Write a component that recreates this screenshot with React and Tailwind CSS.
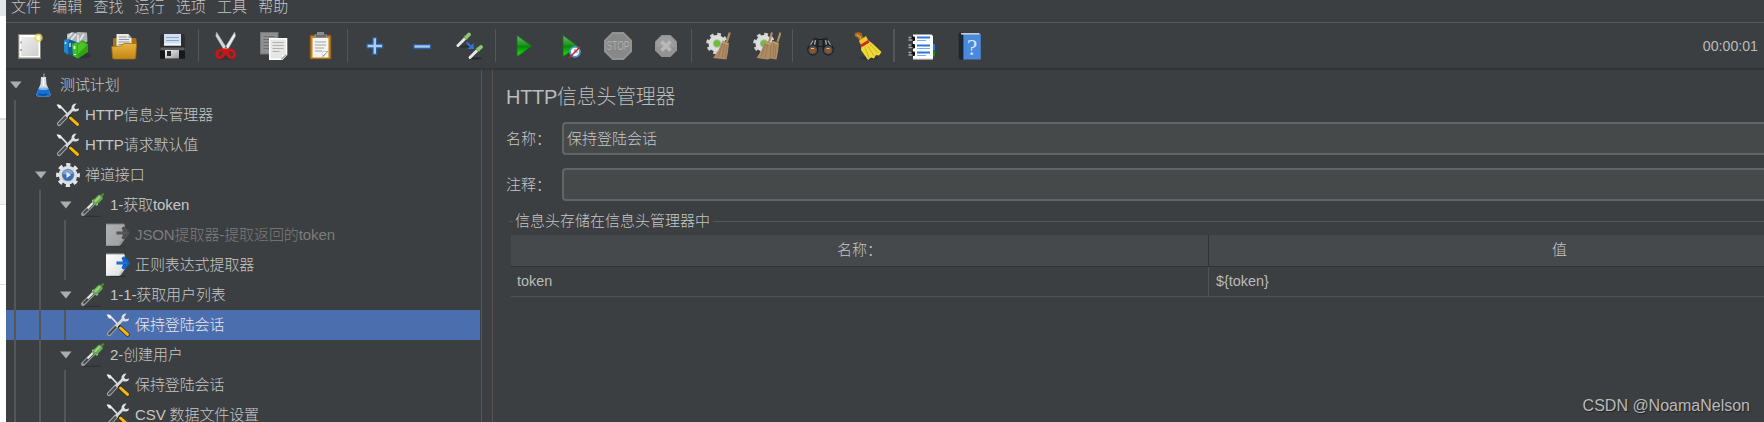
import clsx from 'clsx'

const MENUS = ['文件', '编辑', '查找', '运行', '选项', '工具', '帮助']

const TREE = [
  { level: 0, icon: 'flask', label: '测试计划', open: true },
  { level: 1, icon: 'tools', label: 'HTTP信息头管理器' },
  { level: 1, icon: 'tools', label: 'HTTP请求默认值' },
  { level: 1, icon: 'gear', label: '禅道接口', open: true },
  { level: 2, icon: 'dropper', label: '1-获取token', open: true },
  { level: 3, icon: 'extractor', label: 'JSON提取器-提取返回的token', disabled: true },
  { level: 3, icon: 'extractor', label: '正则表达式提取器' },
  { level: 2, icon: 'dropper', label: '1-1-获取用户列表', open: true },
  { level: 3, icon: 'tools', label: '保持登陆会话', selected: true },
  { level: 2, icon: 'dropper', label: '2-创建用户', open: true },
  { level: 3, icon: 'tools', label: '保持登陆会话' },
  { level: 3, icon: 'tools', label: 'CSV 数据文件设置' },
]

/* ---------- toolbar icons, 28x28 ---------- */

function Svg({ children }) {
  return <svg viewBox="0 0 28 28" className="w-7 h-7 shrink-0">{children}</svg>
}

function NewIcon() {
  return (
    <Svg>
      <rect x="2" y="2" width="23" height="25" fill="#85857a" />
      <rect x="3.3" y="3" width="20.7" height="22.5" fill="#fff" />
      <rect x="5" y="5" width="17.5" height="19" fill="url(#paper)" />
      <path d="M5 9.5v2M5 17v2" stroke="#888" strokeWidth="1.2" />
      <circle cx="22.5" cy="5.7" r="4.3" fill="#e8d84c" opacity=".75" />
      <circle cx="22.5" cy="5.7" r="2.2" fill="#fffef0" />
    </Svg>
  )
}

function TemplatesIcon() {
  return (
    <Svg>
      <ellipse cx="18" cy="23.5" rx="9" ry="3" fill="#292b2c" opacity=".6" />
      <path d="M3 2 9 0l2 1 3-1 9 .5.5 9L16 14 3 10z" fill="#aeb4b6" />
      <path d="M4 5 8 1M7 8l5-6M16 8l4-6M14 3v7" stroke="#e8ecec" strokeWidth="1.5" />
      <path d="M0 8 4.5 7v16L0 20z" fill="#1e86cc" />
      <path d="m4.5 7 8 3v15l-8-3z" fill="#0c5f9f" />
      <path d="M1.5 10v2M6 11v4" stroke="#b8e2fa" strokeWidth="1.5" />
      <path d="m8 12 6-2v16.500l-5-2.500z" fill="#42bd22" />
      <path d="m13.500 12 5-4 5.500 4v8l-10.500 7z" fill="#2fa312" />
      <path d="m14 13 4-3.500 5 3.500-9 9z" fill="#4cc428" />
      <path d="M10.500 14v3M11 22v1" stroke="#eaffdf" strokeWidth="1.8" />
    </Svg>
  )
}

function OpenIcon() {
  return (
    <Svg>
      <path d="M2 8q0-2 2-2h20q1.500 0 1.500 2v8H2z" fill="#a87414" />
      <path d="M5.5 2h12l3 4v10h-15z" fill="#e9e9e9" />
      <path d="M8 5h8M8 7.5h10M7.5 10h11M7.5 12.5h11" stroke="#999" />
      <path d="M17.5 2v4h3z" fill="#aaa" />
      <path d="M.7 14.500 10 14l3-2.500h12.500l-.8 14q0 1.500-2 1.500H3q-1.500 0-1.500-2z" fill="url(#folder)" stroke="#a56e0c" strokeWidth=".8" />
    </Svg>
  )
}

function SaveIcon() {
  return (
    <Svg>
      <path d="M2.5 2h22l1.500 2v23H1V4z" fill="#2c2d2f" />
      <path d="M1 19h25v7.5H1z" fill="#161718" />
      <path d="M1.5 15.500h24v2.500h-24z" fill="#5c5f61" />
      <rect x="5" y="2" width="17" height="11.500" fill="#d0dff2" />
      <path d="M7 5.500h13M7 8.500h13" stroke="#90a5bd" />
      <path d="M5 12.500h17" stroke="#f4f7fa" strokeWidth="2" />
      <rect x="6" y="18" width="14" height="8.500" fill="url(#steel)" />
      <rect x="8" y="19" width="4" height="5" fill="#27292a" />
    </Svg>
  )
}

function CutIcon() {
  return (
    <Svg>
      <ellipse cx="14" cy="26" rx="10" ry="2" fill="#292b2c" opacity=".5" />
      <path d="m4.500 0-.8 4L12 18h4z" fill="#d8dada" stroke="#8f9192" strokeWidth=".6" />
      <path d="m22.700 0 .8 4L15.500 18h-4z" fill="#eeefef" stroke="#9b9d9e" strokeWidth=".6" />
      <circle cx="14" cy="15.500" r="1" fill="#666" />
      <g fill="none" stroke="#d01414" strokeWidth="2.900">
        <path d="M12.500 18Q4.500 17 4.900 23q.8 4 4.800 2 3-2 2.800-7z" />
        <path d="M15 18q8-1 7.600 5-.8 4-4.800 2-3-2-2.800-7z" />
      </g>
    </Svg>
  )
}

function CopyIcon() {
  return (
    <Svg>
      <rect x=".5" y=".5" width="17.500" height="21.500" fill="#8e9091" stroke="#75787a" />
      <path d="M3.500 4.500h11M3.500 7.500h6M3.500 10.500h6M3.500 13.500h6M3.500 16.500h6" stroke="#6d6f70" />
      <path d="M9 6h18.300v17l-5 5H9z" fill="#fff" />
      <path d="M10.500 7.500h15.300V22l-4 4.500H10.500z" fill="#e6e7e5" />
      <path d="M12.500 10.500h11M12.500 13.500h11M12.500 16.500h11M12.500 19.500h7" stroke="#b0b2b0" />
      <path d="M21.500 28v-5.500h6z" fill="#a8aaa8" />
      <path d="M21.500 26v-3.500h4z" fill="#fff" />
    </Svg>
  )
}

function PasteIcon() {
  return (
    <Svg>
      <rect x="2.700" y="2.700" width="21.700" height="24.600" rx="1" fill="#8a5510" />
      <rect x="3.700" y="4" width="19.700" height="22.500" fill="#c98316" />
      <rect x="5.500" y="6" width="16" height="19.500" fill="#f4f4f2" />
      <path d="M8 10h11M8 13h11M8 16h9M8 19h7" stroke="#a2a4a2" />
      <path d="M15.500 25.500V19l6 0z" fill="#8a8c8a" />
      <path d="M15.500 24v-4.500h5z" fill="#fff" />
      <path d="M10 0h7v2.500h3V6H7.500V2.500H10z" fill="#8c8e8e" />
      <path d="M9 4h10" stroke="#55585a" strokeWidth="1.300" />
    </Svg>
  )
}

function PlusIcon() {
  return (
    <Svg>
      <path d="M11.300 5h5v6.500h6v5h-6V23h-5v-6.500h-6v-5h6z" fill="#2d5f9f" />
      <path d="M12.600 6.300H15v6.500h6v2.400h-6v6.500h-2.400v-6.500h-6v-2.400h6z" fill="#a9ccf0" />
    </Svg>
  )
}

function MinusIcon() {
  return (
    <Svg>
      <path d="M5.200 12h18v5.200h-18z" fill="#2d5f9f" />
      <path d="M6.500 13.300h15.400v2.400H6.500z" fill="#a9ccf0" />
    </Svg>
  )
}

function ToggleIcon() {
  return (
    <Svg>
      <ellipse cx="19" cy="26.500" rx="7" ry="1.200" fill="#25282a" />
      <ellipse cx="8" cy="14.500" rx="6" ry="1" fill="#2a2d2f" />
      <path d="m2 13.500 7-7" stroke="#e6e7e4" strokeWidth="3" strokeLinecap="round" />
      <path d="m9 6.500 1.500-1.500" stroke="#5e7d4e" strokeWidth="5" />
      <path d="m10.500 5 2.500-2.500" stroke="#8fc873" strokeWidth="3.800" strokeLinecap="round" />
      <path d="m14 25.500 7-7" stroke="#e6e7e4" strokeWidth="3" strokeLinecap="round" />
      <path d="m21 18.500 1.500-1.500" stroke="#5e7d4e" strokeWidth="5" />
      <path d="m22.500 17 2.500-2" stroke="#8fc873" strokeWidth="3.800" strokeLinecap="round" />
      <path d="m10.500 10.500 5 4.500" stroke="#2d74dc" strokeWidth="2" />
      <path d="m17.500 11 .5 6h-6.500z" fill="#2d74dc" />
    </Svg>
  )
}

function PlayIcon() {
  return (
    <Svg>
      <path d="M8 3.300 22.700 14 8 25z" fill="url(#play)" stroke="#126f12" strokeWidth=".7" />
    </Svg>
  )
}

function PlayNoPauseIcon() {
  return (
    <Svg>
      <path d="M6 3.300 20.700 14 6 25z" fill="url(#play)" stroke="#126f12" strokeWidth=".7" />
      <circle cx="18" cy="19.800" r="5" fill="#f4f7fb" stroke="#5793d3" strokeWidth="1.700" />
      <path d="M18 17v3h3" fill="none" stroke="#6c7e94" />
      <path d="m12 26 11.500-11.500" stroke="#c32222" strokeWidth="1.500" />
    </Svg>
  )
}

function StopIcon() {
  return (
    <Svg>
      <path d="M8.300 0h11.400L28 8.300v11.400L19.700 28H8.300L0 19.700V8.300z" fill="#909090" />
      <path d="M8.900 1.500h10.200l7.400 7.400v10.200l-7.400 7.400H8.900l-7.400-7.400V8.900z" fill="#888888" stroke="#979797" />
      <text x="14" y="18.200" textAnchor="middle" textLength="23" lengthAdjust="spacingAndGlyphs" fontFamily="Liberation Sans" fontSize="12" fill="#adadad">STOP</text>
    </Svg>
  )
}

function ShutdownIcon() {
  return (
    <Svg>
      <path d="M9.500 3h9L25 9.500v9L18.500 25h-9L3 18.500v-9z" fill="#939393" />
      <path d="M10 4.500h8l5.500 5.500v5h-19v-5z" fill="#9d9d9d" />
      <path d="m9.500 9.500 9 9m0-9-9 9" stroke="#b9b9b9" strokeWidth="3.600" />
    </Svg>
  )
}

function Cog({ cx, cy }) {
  return (
    <>
      <circle cx={cx} cy={cy} r="9.300" fill="none" stroke="#d2d4d4" strokeWidth="3" strokeDasharray="3.650 3.650" />
      <circle cx={cx} cy={cy} r="8.500" fill="#dcdede" />
      <circle cx={cx} cy={cy} r="4.200" fill="#b5bbb0" />
      <circle cx={cx} cy={cy} r="3.200" fill="#6cc030" />
    </>
  )
}

function ClearIcon() {
  return (
    <Svg>
      <Cog cx={12} cy={11.500} />
      <path d="m24.800.5-3 9.500" stroke="#b08c62" strokeWidth="2.200" />
      <path d="m17.500 8.500 6.500 2.500-1 9-1.500 7.500L8 26l5-7z" fill="#b08c62" />
      <path d="m18 11-5 14M20 11l-3 15M22 13l-2 14" stroke="#8d7050" strokeWidth=".7" />
      <path d="m17 10 6 2.500" stroke="#c7a77c" />
    </Svg>
  )
}

function ClearAllIcon() {
  return (
    <Svg>
      <Cog cx={11} cy={11.500} />
      <path d="m19 .5-3 9.500M27.500.5l-3 9.500" stroke="#b08c62" strokeWidth="2.200" />
      <path d="m12.500 9 5 1.500 3-1.500 5.500 2-1 9-1.500 7.500-6-1-3 1L3.500 26 8 19z" fill="#b08c62" />
      <path d="M13 11 8 25m7-14-3 15m6-14-1 14m4-15-1 14m3-12-1 13" stroke="#8d7050" strokeWidth=".7" />
      <path d="m12 10.500 5.500 2m2.500-2.500 5 2" stroke="#c7a77c" />
    </Svg>
  )
}

function BinocularsIcon() {
  return (
    <Svg>
      <path d="m6 8 3-2.500 4 1.500-.5 10L10 21H4L1 16z" fill="#222425" />
      <path d="m23 8-3-2.500L16 7l.5 10 2.500 4h6l3-5z" fill="#222425" />
      <rect x="12" y="7.500" width="5" height="7" fill="#3f4345" stroke="#17191a" />
      <path d="m7 8.500-3 5.500M9.500 8l-1 5M22 8.500l3 5.500M19.500 8l1 5" stroke="#979b9e" strokeWidth="1.500" />
      <circle cx="6.800" cy="18" r="5" fill="#4c4f51" stroke="#17191a" />
      <circle cx="22.200" cy="18" r="5" fill="#4c4f51" stroke="#17191a" />
      <ellipse cx="6.800" cy="18.200" rx="3.200" ry="2.800" fill="#8f5528" />
      <ellipse cx="22.200" cy="18.200" rx="3.200" ry="2.800" fill="#8f5528" />
      <path d="M5 16.500h3M20.500 16.500h3" stroke="#ddb98d" />
    </Svg>
  )
}

function BroomIcon() {
  return (
    <Svg>
      <ellipse cx="15" cy="26" rx="10" ry="2" fill="#292b2c" opacity=".6" />
      <path d="M.5 1.500 4 0l3.500 1 1 3L11 8l-5 3-2-5-3-1.500z" fill="#a5681e" />
      <path d="M2.500 2.500 6 5l2 4" fill="none" stroke="#dc9f46" strokeWidth="1.500" />
      <path d="m5 9 7-5 3 6-7 5z" fill="#e9c832" />
      <path d="m7.500 13.500 7-5 4 3 9 8.500-2.500 3.500-3-.5-2 3.500-3-1-3 2.500L7 18z" fill="#ecd936" />
      <path d="m11 15 4 11m-1-12 6 10m-4-12 8 9" stroke="#c9a616" strokeWidth=".8" />
      <path d="m6 13 8-5 1.500 2.500L8 15z" fill="#d7261d" />
    </Svg>
  )
}

function FunctionsIcon() {
  return (
    <Svg>
      <path d="M24 12h4v6h-4z" fill="#2c7be0" />
      <path d="M24 18.500h4v6h-4z" fill="#14901a" />
      <path d="M6 2.500h18.500l1.500 1.500v23.300H6z" fill="#fff" />
      <path d="M6.500 27h19.500" stroke="#c9c9c9" />
      <path d="M10 5.500h13M10 13.500h13M10 20.500h13" stroke="#2878dc" strokeWidth="2" />
      <path d="M10 8.500h9M10 16.500h13M10 23.500h9" stroke="#79abe6" />
      {[7, 14.5, 22].map(y => (
        <g key={y}>
          <rect x="4" y={y - 2.5} width="4" height="4.500" rx="1" fill="#101112" />
          <path d={`M1.500 ${y + 1}h4M1.500 ${y - 1.5}h3`} stroke="#a9abab" strokeWidth="1.300" />
        </g>
      ))}
    </Svg>
  )
}

function HelpIcon() {
  return (
    <Svg>
      <path d="M3.700 1.500 5 .5v27l-1.300-1z" fill="#232527" />
      <path d="M5 .8h4v27H6q-2 0-2-2z" fill="#1c2733" />
      <path d="M8 2h17.800v25.500H8z" fill="#4a89dc" />
      <path d="M6 1.800h18.500" stroke="#d5dbe2" strokeWidth="1.400" />
      <path d="M8.500 3v24" stroke="#2f63aa" />
      <text x="17" y="22.500" textAnchor="middle" fontFamily="Liberation Serif" fontSize="23" fill="#d5e6fb">?</text>
    </Svg>
  )
}

const TOOLBAR = [
  [NewIcon, TemplatesIcon, OpenIcon, SaveIcon],
  [CutIcon, CopyIcon, PasteIcon],
  [PlusIcon, MinusIcon, ToggleIcon],
  [PlayIcon, PlayNoPauseIcon, StopIcon, ShutdownIcon],
  [ClearIcon, ClearAllIcon],
  [BinocularsIcon, BroomIcon],
  [FunctionsIcon, HelpIcon],
]

/* ---------- tree icons, 24x24 ---------- */

const TREE_ICONS = {
  flask: (
    <>
      <ellipse cx="12" cy="22.500" rx="8" ry="1.500" fill="#292c2e" />
      <path d="M13 .5v4" stroke="#777b80" strokeWidth="2" />
      <path d="M10 4h5l.5 7 4 10q.3 2.500-2 2.500h-10q-2.500 0-2-2.500l4-10z" fill="#d3d9e1" />
      <path d="M12.500 5v8" stroke="#fff" strokeWidth="1.500" />
      <path d="m7.500 15.500 10 0 2 5.500q0 2.500-2 2.500h-10q-2.500 0-2-2.500z" fill="#1671d4" />
      <ellipse cx="12.500" cy="15.700" rx="5" ry="1.300" fill="#7fb5ee" />
      <path d="M8 21q4 2 8 0" stroke="#0b4da6" strokeWidth="1.500" fill="none" />
    </>
  ),
  tools: (
    <>
      <path d="m1.500 2 3 1.500L12 11.500" fill="none" stroke="#e2e3e3" strokeWidth="1.800" />
      <path d="M.5 1.500 4.500 2 5.500 5.500 3 5.500z" fill="#f2f2f2" />
      <path d="m12 12.500 2.500 2" stroke="#24262a" strokeWidth="3.500" />
      <path d="m15 15.500 6.500 6" stroke="#3a2f0a" strokeWidth="4.400" strokeLinecap="round" />
      <path d="m14.500 15 7 6.400" stroke="#f7b90f" strokeWidth="3" strokeLinecap="round" />
      <path d="m3 21 7-7.500" stroke="#a5a7a8" strokeWidth="4.200" strokeLinecap="round" />
      <path d="m3.200 20.800 6.800-7.100" stroke="#4a4d4f" strokeWidth="2.300" strokeLinecap="round" />
      <path d="m10 13.500 7.500-8" stroke="#d6d8d8" strokeWidth="2.600" />
      <path d="M20.500.5q-5 0-5 4.500 .5 4 4 3.500 3.500 0 3.500-3l-3.500.7-1.500-2z" fill="#dfe1e1" />
    </>
  ),
  gear: (
    <>
      <circle cx="12" cy="12" r="10.200" fill="none" stroke="#e4e7ea" strokeWidth="3.400" strokeDasharray="4.200 3.810" strokeDashoffset="2.100" />
      <circle cx="12" cy="12" r="9.300" fill="#dde0e3" />
      <circle cx="12" cy="12" r="6.300" fill="#8295ae" />
      <circle cx="12" cy="12" r="5.500" fill="#3a6cb0" />
      <path d="M7 11q0-4 5-4.500 5 .5 5 4-5 2-10 .5z" fill="#7ea4d8" />
      <path d="m10.500 9 4.500 3-4.500 3z" fill="#e6eefa" />
    </>
  ),
  dropper: (
    <>
      <path d="M2 23.300h18" stroke="#2b2e30" />
      <path d="m2 21 10.500-10.500" stroke="#969a98" strokeWidth="4" strokeLinecap="round" />
      <path d="m3 19.800 9.500-9.300" stroke="#3e4243" strokeWidth="1.800" strokeLinecap="round" />
      <path d="m6.500 15.500 6-6" stroke="#e9ebe9" strokeWidth="1.800" />
      <path d="m11.500 7 5 5" stroke="#d3d6d3" strokeWidth="2" />
      <path d="m14.500 9 4-4" stroke="#65aa50" strokeWidth="6" strokeLinecap="round" />
      <path d="m14.500 8 4-4" stroke="#9ad683" strokeWidth="2" strokeLinecap="round" />
      <path d="m20 3.500 2.700-3" stroke="#4d8a3b" strokeWidth="2" />
    </>
  ),
  extractor: (
    <>
      <path d="M4 23.300h16" stroke="#2b2e30" />
      <path d="M0 .5h18l1 2V16l-4 6-2 1H0z" fill="#9fa2a2" />
      <path d="M0 1.500h18l.5 1V16l-4 5.500-1.500 1H0z" fill="url(#sheet)" />
      <path d="m13 22.500 1-3.500 4.500-3-4 5.500z" fill="#c4c7c7" />
      <path d="M10.500 8.500H17L15.500 5 17.500 3.500l2 .5L24 10l-4.500 6-2 .5-2-1.500L17 11.500h-6.500z" fill="#1363c4" />
      <path d="M11.500 10h10" stroke="#2f7fdc" />
    </>
  ),
}

function TreeRow({ level, icon, label, open, selected, disabled }) {
  return (
    <div className={clsx('flex items-center h-[30px] w-[474px]', selected && 'bg-[#4b6eaf] text-[#eaeaea]', disabled && 'text-[#7c7c7c]')}>
      {Array.from({ length: level }, (_, i) => (
        <div key={i} className="w-[25px] h-full pl-2 shrink-0">
          <div className="w-[2px] h-full bg-[#555657]" />
        </div>
      ))}
      <div className="w-[25px] pl-1 shrink-0">
        {open && (
          <svg viewBox="0 0 12 8" className="w-3 h-2">
            <path d="M0 .5h11.500L6 7.500z" fill="#adadad" />
          </svg>
        )}
      </div>
      <svg viewBox="0 0 24 24" className={clsx('w-6 h-6 shrink-0 mr-[5px]', disabled && 'grayscale opacity-60')}>
        {TREE_ICONS[icon]}
      </svg>
      <span className="whitespace-nowrap tracking-[-0.1px]">{label}</span>
    </div>
  )
}

function Field({ label, value }) {
  return (
    <div className="flex items-center h-[33px]">
      <label className="w-[56px] shrink-0">{label}</label>
      <div className="flex-1 h-full flex items-center pl-[3px] bg-[#45494a] border-2 border-r-0 border-[#646464] rounded-l">
        {value}
      </div>
    </div>
  )
}

export default function App() {
  return (
    <div className="w-full h-[422px] overflow-hidden flex bg-[#3c3f41] text-[#c6c6c6] text-[15px] leading-[30px] font-light font-['Liberation_Sans','Noto_Sans_CJK_SC',sans-serif]">
      {/* gradients shared by the icons */}
      <svg className="absolute w-0 h-0">
        <defs>
          <linearGradient id="paper" x1="0" y1="0" x2="1" y2="1">
            <stop offset="0" stopColor="#eeeeee" /><stop offset="1" stopColor="#cfcfcf" />
          </linearGradient>
          <linearGradient id="sheet" x1="0" y1="0" x2="1" y2="1">
            <stop offset="0" stopColor="#ffffff" /><stop offset="1" stopColor="#dddddd" />
          </linearGradient>
          <linearGradient id="folder" x1="0" y1="0" x2="0" y2="1">
            <stop offset="0" stopColor="#e9b440" /><stop offset="1" stopColor="#c48714" />
          </linearGradient>
          <linearGradient id="steel" x1="0" y1="0" x2="1" y2="1">
            <stop offset="0" stopColor="#f4f4f4" /><stop offset="1" stopColor="#999" />
          </linearGradient>
          <linearGradient id="play" x1="0" y1="0" x2="0" y2="1">
            <stop offset="0" stopColor="#72b472" /><stop offset=".45" stopColor="#1d941d" />
            <stop offset=".5" stopColor="#0a860a" /><stop offset=".85" stopColor="#14cf14" /><stop offset="1" stopColor="#0a8c0a" />
          </linearGradient>
        </defs>
      </svg>

      {/* page edge behind the window */}
      <div className="w-1.5 shrink-0 flex flex-col bg-white">
        <div className="h-4 bg-[#e2e5e8]" />
        <div className="h-[104px] border-b-2 border-[#dddddd]" />
        <div className="h-[85px] bg-[#f3f3f3] border-b border-[#dddddd]" />
        <div className="h-20 border-b border-[#dddddd]" />
      </div>

      <div className="flex-1 min-w-0 flex flex-col">
        <div className="h-[23px] shrink-0 flex gap-[11.2px] pl-[5px] leading-[14px] border-b border-[#555657]">
          {MENUS.map(m => <span key={m}>{m}</span>)}
        </div>

        <div className="h-[47px] shrink-0 flex items-center pl-[10px] pr-[6px] border-b-2 border-[#323537]">
          {TOOLBAR.map((group, i) => (
            <div key={i} className="flex items-center">
              {i > 0 && (
                <div className="w-[25.3px] pl-[11.5px]">
                  <div className={clsx('h-[33px] bg-[#555657]', i === TOOLBAR.length - 1 ? 'w-[2px]' : 'w-px')} />
                </div>
              )}
              <div className="flex gap-[19.6px]">
                {group.map((Icon, j) => <Icon key={j} />)}
              </div>
            </div>
          ))}
          <span className="ml-auto text-[14.2px] text-[#bbbbbb]">00:00:01</span>
        </div>

        <div className="flex-1 min-h-0 flex">
          <div className="w-[476px] shrink-0 border-r border-[#555657] overflow-hidden">
            {TREE.map((row, i) => <TreeRow key={i} {...row} />)}
          </div>
          <div className="w-[11px] shrink-0 border-r border-[#5a5552]" />

          <div className="flex-1 min-w-0 flex flex-col pl-[13px]">
            <h1 className="text-[20px] leading-[30px] mt-3 mb-[10px] tracking-[-0.3px] text-[#bbbbbb]">HTTP信息头管理器</h1>
            <div className="flex flex-col gap-[13px]">
              <Field label="名称：" value="保持登陆会话" />
              <Field label="注释：" />
            </div>

            <div className="flex items-center h-5 mt-[10px] pl-[3px]">
              <div className="w-1 h-px bg-[#555657]" />
              <span className="pl-[2px] pr-[3px] leading-5">信息头存储在信息头管理器中</span>
              <div className="flex-1 h-px bg-[#555657]" />
            </div>

            <div className="ml-[5px] mt-1 w-[1399px] grid grid-cols-[698px_701px]">
              <div className="h-8 text-center bg-[#45494b] border-r border-b border-[#313436]">名称：</div>
              <div className="h-8 text-center bg-[#45494b] border-b border-[#313436]">值</div>
              <div className="h-[30px] pl-[6px] leading-[29px] text-[14.4px] text-[#bbbbbb] border-r border-b border-[#505355]">token</div>
              <div className="h-[30px] pl-[7px] leading-[29px] text-[14.4px] text-[#bbbbbb] border-b border-[#505355]">{'${token}'}</div>
            </div>

            <div className="mt-auto mb-0.5 mr-[14px] self-end leading-7 text-base text-[#b9babb] [text-shadow:1px_1px_1px_#222]">CSDN @NoamaNelson</div>
          </div>
        </div>
      </div>
    </div>
  )
}
